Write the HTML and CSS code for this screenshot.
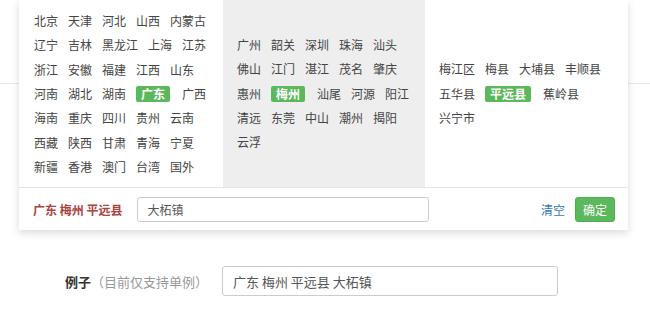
FILE: index.html
```html
<!DOCTYPE html>
<html lang="zh-CN">
<head>
  <meta charset="UTF-8">
  <title>地区选择</title>
  <link rel="stylesheet" href="styles.css">
</head>
<body>
  <div class="page">
    <div class="top-row"></div>

    <div class="form-row">
      <label class="form-label">例子<span class="hint">（目前仅支持单例）</span></label>
      <input class="form-input" type="text" value="广东 梅州 平远县 大柘镇">
    </div>

    <div class="picker">
      <div class="picker-cols">
        <div class="col col-province">
          <div class="row"><span class="item">北京</span><span class="item">天津</span><span class="item">河北</span><span class="item">山西</span><span class="item">内蒙古</span></div>
          <div class="row"><span class="item">辽宁</span><span class="item">吉林</span><span class="item">黑龙江</span><span class="item">上海</span><span class="item">江苏</span></div>
          <div class="row"><span class="item">浙江</span><span class="item">安徽</span><span class="item">福建</span><span class="item">江西</span><span class="item">山东</span></div>
          <div class="row"><span class="item">河南</span><span class="item">湖北</span><span class="item">湖南</span><span class="item active">广东</span><span class="item">广西</span></div>
          <div class="row"><span class="item">海南</span><span class="item">重庆</span><span class="item">四川</span><span class="item">贵州</span><span class="item">云南</span></div>
          <div class="row"><span class="item">西藏</span><span class="item">陕西</span><span class="item">甘肃</span><span class="item">青海</span><span class="item">宁夏</span></div>
          <div class="row"><span class="item">新疆</span><span class="item">香港</span><span class="item">澳门</span><span class="item">台湾</span><span class="item">国外</span></div>
        </div>
        <div class="col col-city">
          <div class="row"><span class="item">广州</span><span class="item">韶关</span><span class="item">深圳</span><span class="item">珠海</span><span class="item">汕头</span></div>
          <div class="row"><span class="item">佛山</span><span class="item">江门</span><span class="item">湛江</span><span class="item">茂名</span><span class="item">肇庆</span></div>
          <div class="row"><span class="item">惠州</span><span class="item active">梅州</span><span class="item">汕尾</span><span class="item">河源</span><span class="item">阳江</span></div>
          <div class="row"><span class="item">清远</span><span class="item">东莞</span><span class="item">中山</span><span class="item">潮州</span><span class="item">揭阳</span></div>
          <div class="row"><span class="item">云浮</span></div>
        </div>
        <div class="col col-district">
          <div class="row"><span class="item">梅江区</span><span class="item">梅县</span><span class="item">大埔县</span><span class="item">丰顺县</span></div>
          <div class="row"><span class="item">五华县</span><span class="item active">平远县</span><span class="item">蕉岭县</span></div>
          <div class="row"><span class="item">兴宁市</span></div>
        </div>
      </div>
      <div class="picker-bar">
        <span class="picked">广东 梅州 平远县</span>
        <input class="bar-input" type="text" value="大柘镇">
        <a class="clear-link" href="#">清空</a>
        <button class="btn-ok">确定</button>
      </div>
    </div>
  </div>
</body>
</html>
```

FILE: styles.css
```css
body {
  margin: 0;
  background-color: #fff;
  color: #444;
  font-family: "Noto Sans CJK SC", "Liberation Sans", sans-serif;
  font-size: 12px;
}
.page {
  position: relative;
  width: 650px;
  height: 329px;
}
.top-row {
  height: 83px;
  border-bottom: 1px solid #e8e8e8;
}
.form-row {
  display: flex;
  align-items: center;
  padding: 182px 0 0 65px;
}
.form-label {
  width: 157px;
  font-size: 13px;
  font-weight: bold;
  color: #333;
}
.hint {
  font-weight: normal;
  color: #999;
}
.form-input {
  box-sizing: border-box;
  width: 336px;
  height: 30px;
  padding: 0 10px;
  border: 1px solid #ccc;
  border-radius: 3px;
  font-family: inherit;
  font-size: 13px;
  color: #555;
}

/* dropdown */
.picker {
  position: absolute;
  left: 19px;
  top: 0;
  width: 609px;
  background-color: #fff;
  box-shadow: 0 3px 8px rgba(0, 0, 0, 0.15);
}
.picker-cols {
  display: grid;
  grid-template-columns: 204px 202px 1fr;
  height: 187px;
}
.col {
  display: flex;
  flex-direction: column;
  justify-content: center;
  gap: 8.4px;
  padding: 0 8px 0 14px;
}
.col-province {
  padding-left: 15px;
  padding-top: 1px;
}
.col-city {
  background-color: #eee;
}
.row {
  display: flex;
}
.item {
  height: 16px;
  line-height: 16px;
  margin-right: 10px;
  white-space: nowrap;
  cursor: pointer;
}
.item.active {
  padding: 0 5px;
  margin-right: 12px;
  border-radius: 2px;
  background-color: #5cb85c;
  color: #fff;
  font-weight: bold;
}
.picker-bar {
  display: flex;
  align-items: center;
  height: 42px;
  padding: 0 13px 0 14px;
  border-top: 1px solid #e5e5e5;
}
.picked {
  color: #a94442;
  font-weight: bold;
}
.bar-input {
  box-sizing: border-box;
  width: 292px;
  height: 25px;
  margin-left: 15px;
  padding: 0 9px;
  border: 1px solid #ccc;
  border-radius: 3px;
  font-family: inherit;
  font-size: 12px;
  color: #555;
}
.clear-link {
  margin-left: auto;
  margin-right: 10px;
  color: #337ab7;
  text-decoration: none;
}
.btn-ok {
  height: 25px;
  padding: 0 7px;
  border: 1px solid #4cae4c;
  border-radius: 3px;
  background-color: #5cb85c;
  color: #fff;
  font-family: inherit;
  font-size: 12px;
}
```
